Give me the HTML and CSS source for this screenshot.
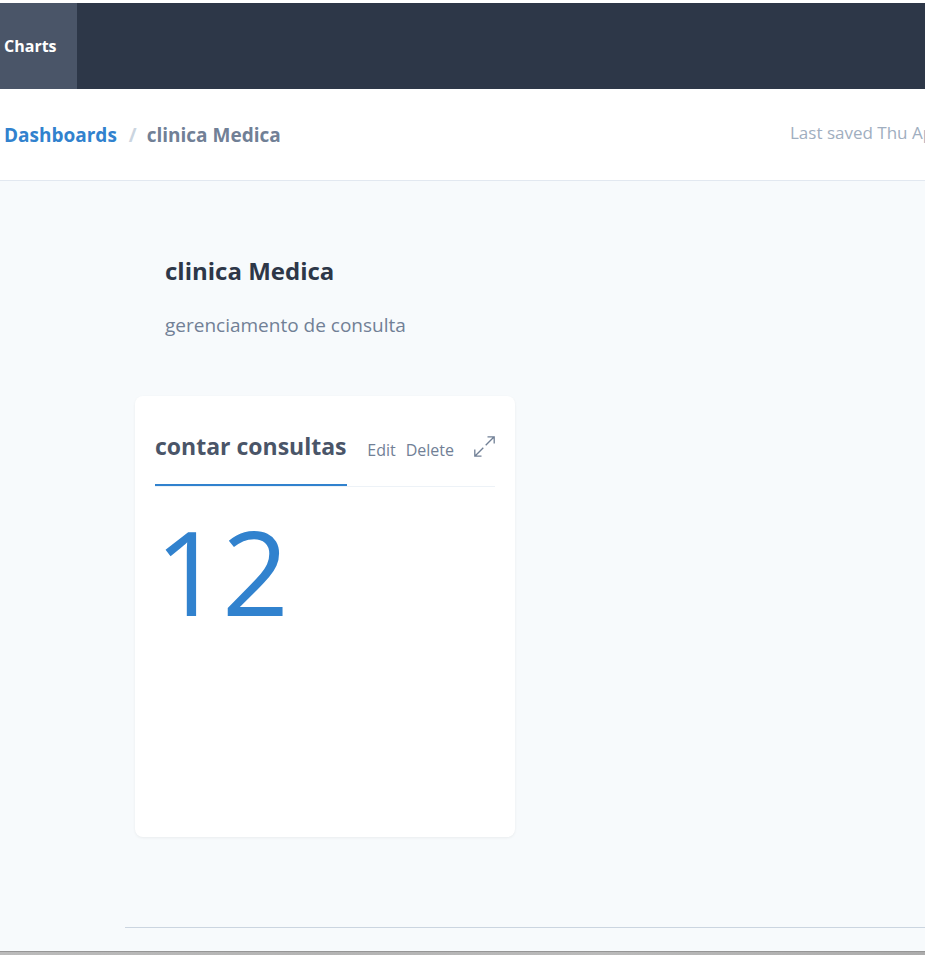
FILE: index.html
```html
<!DOCTYPE html>
<html lang="en">
<head>
<meta charset="utf-8">
<meta name="viewport" content="width=device-width, initial-scale=1">
<title>clinica Medica</title>
<link rel="stylesheet" href="styles.css">
</head>
<body>
<nav class="navbar">
  <a class="nav-link" href="#">Charts</a>
</nav>
<header class="header">
  <div class="breadcrumb">
    <a class="crumb-link" href="#">Dashboards</a>
    <span class="crumb-separator">/</span>
    <span class="crumb-current">clinica Medica</span>
  </div>
  <span class="saved">Last saved Thu Ap</span>
</header>
<main class="content">
  <div class="intro">
    <h1 class="title">clinica Medica</h1>
    <p class="description">gerenciamento de consulta</p>
  </div>
  <section class="card">
    <div class="card-header">
      <h2 class="card-title">contar consultas</h2>
      <div class="card-actions">
        <button class="text-button" type="button">Edit</button>
        <button class="text-button" type="button">Delete</button>
        <button class="icon-button" type="button" aria-label="Expand">
          <svg width="21" height="21" viewBox="0 0 21 21" fill="none" stroke="currentColor" stroke-width="1.3">
            <path d="M13.500 .8h6.700v6.700M20.200 .8l-8.500 8.500M7.500 20.200H.8v-6.700M.8 20.200l8.500-8.500"/>
          </svg>
        </button>
      </div>
    </div>
    <div class="value">12</div>
  </section>
  <hr class="divider">
</main>
<footer class="bottom-bar"></footer>
</body>
</html>
```
FILE: styles.css
```css
* {
  box-sizing: border-box;
}

body {
  display: flex;
  flex-direction: column;
  min-height: 100vh;
  margin: 0;
  padding-top: 3px;
  overflow-x: hidden;
  background: #fff;
  color: #2d3748;
  font-family: "Segoe UI", "Open Sans", "Noto Sans", sans-serif;
}

a {
  text-decoration: none;
}

h1, h2, p {
  margin: 0;
}

.navbar {
  display: flex;
  background: #2d3748;
}

.nav-link {
  padding: 31px 20px 31px 4px;
  background: #4a5568;
  color: #fff;
  font-size: 16px;
  font-weight: 700;
  line-height: 24px;
}

.header {
  display: flex;
  align-items: flex-start;
  justify-content: space-between;
  padding: 31px 0 30px 4px;
  border-bottom: 1px solid #e2e8f0;
  white-space: nowrap;
}

.breadcrumb {
  display: flex;
  font-size: 19px;
  font-weight: 700;
  line-height: 30px;
}

.crumb-link {
  color: #3182ce;
}

.crumb-separator {
  margin: 0 10px 0 12px;
  color: #cbd5e0;
}

.crumb-current {
  color: #718096;
}

.saved {
  width: 135px;
  color: #a0aec0;
  font-size: 17px;
  line-height: 26px;
}

.content {
  flex: 1;
  padding: 70px 0 23px 125px;
  background: #f7fafc;
}

.intro {
  padding: 0 40px;
}

.title {
  font-size: 24px;
  font-weight: 700;
  line-height: 40px;
}

.description {
  margin-top: 19px;
  color: #718096;
  font-size: 19px;
  line-height: 30px;
}

.card {
  width: 380px;
  min-height: 441px;
  margin: 56px 10px 90px;
  padding: 30px 20px;
  border-radius: 8px;
  background: #fff;
  box-shadow: 0 1px 3px rgba(0, 0, 0, 0.06);
}

.card-header {
  display: flex;
  justify-content: space-between;
  border-bottom: 1px solid #edf2f7;
}

.card-title {
  padding-bottom: 18px;
  border-bottom: 2px solid #3182ce;
  color: #4a5568;
  font-size: 23px;
  font-weight: 700;
  line-height: 40px;
  white-space: nowrap;
}

.card-actions {
  display: flex;
  align-items: flex-start;
  gap: 10px;
  padding-top: 10px;
}

button {
  padding: 0;
  border: 0;
  background: none;
  color: #718096;
  font: inherit;
  cursor: pointer;
}

.text-button {
  font-size: 16px;
  line-height: 28px;
}

.icon-button {
  margin-left: 10px;
}

.icon-button svg {
  display: block;
}

.value {
  margin-top: 14px;
  color: #3182ce;
  font-size: 117px;
  line-height: 140px;
}

.divider {
  margin: 0;
  border: 0;
  border-top: 1px solid #cbd5e0;
}

.bottom-bar {
  height: 4px;
  border-top: 1px solid #969696;
  background: linear-gradient(90deg, #bbb, #b4b4b4 35%, #bababa 65%, #acacac);
}
```
